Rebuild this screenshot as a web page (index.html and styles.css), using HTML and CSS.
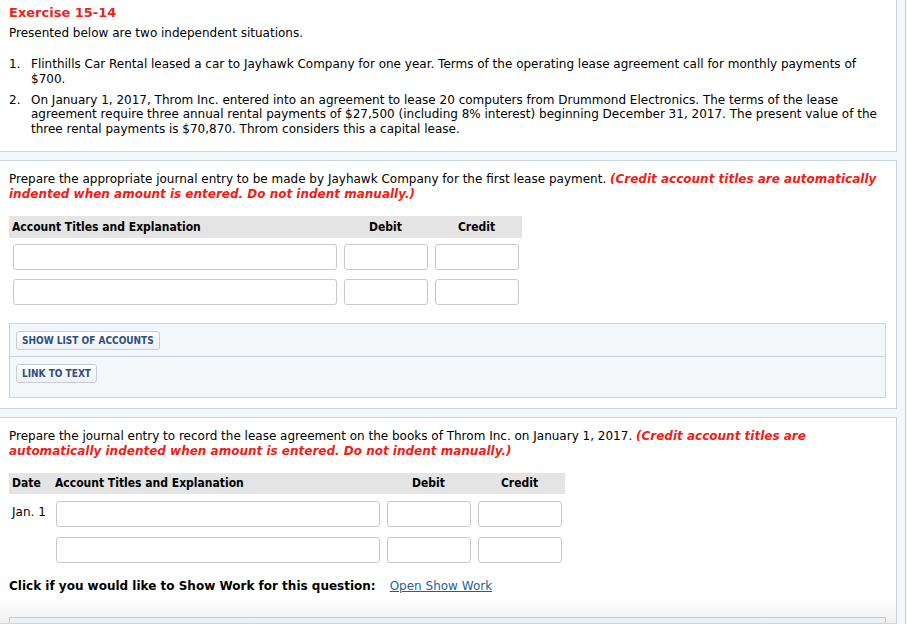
FILE: index.html
```html
<!DOCTYPE html>
<html>
<head>
<meta charset="utf-8">
<link rel="stylesheet" href="styles.css">
</head>
<body>
<div class="page">
  <section class="box intro">
    <h1 class="title">Exercise 15-14</h1>
    <p class="lead">Presented below are two independent situations.</p>
    <ol class="items">
      <li><span class="num">1.</span><span class="txt">Flinthills Car Rental leased a car to Jayhawk Company for one year. Terms of the operating lease agreement call for monthly payments of $700.</span></li>
      <li><span class="num">2.</span><span class="txt">On January 1, 2017, Throm Inc. entered into an agreement to lease 20 computers from Drummond Electronics. The terms of the lease agreement require three annual rental payments of $27,500 (including 8% interest) beginning December 31, 2017. The present value of the three rental payments is $70,870. Throm considers this a capital lease.</span></li>
    </ol>
  </section>

  <section class="box part">
    <p class="prompt">Prepare the appropriate journal entry to be made by Jayhawk Company for the first lease payment. <em class="note">(Credit account titles are automatically</em><br><em class="note">indented when amount is entered. Do not indent manually.)</em></p>
    <div class="journal j3">
      <div class="hd">Account Titles and Explanation</div>
      <div class="hd c">Debit</div>
      <div class="hd c">Credit</div>
      <div class="cell"><input class="fld" type="text"></div>
      <div class="cell"><input class="fld" type="text"></div>
      <div class="cell"><input class="fld" type="text"></div>
      <div class="cell"><input class="fld" type="text"></div>
      <div class="cell"><input class="fld" type="text"></div>
      <div class="cell"><input class="fld" type="text"></div>
    </div>
    <div class="tools">
      <div class="tool-row"><button class="btn">SHOW LIST OF ACCOUNTS</button></div>
      <div class="tool-row last"><button class="btn">LINK TO TEXT</button></div>
    </div>
  </section>

  <section class="box part last-part">
    <p class="prompt">Prepare the journal entry to record the lease agreement on the books of Throm Inc. on January 1, 2017. <em class="note">(Credit account titles are</em><br><em class="note">automatically indented when amount is entered. Do not indent manually.)</em></p>
    <div class="journal j4">
      <div class="hd">Date</div>
      <div class="hd">Account Titles and Explanation</div>
      <div class="hd c">Debit</div>
      <div class="hd c">Credit</div>
      <div class="date">Jan. 1</div>
      <div class="cell"><input class="fld" type="text"></div>
      <div class="cell"><input class="fld" type="text"></div>
      <div class="cell"><input class="fld" type="text"></div>
      <div class="date"></div>
      <div class="cell"><input class="fld" type="text"></div>
      <div class="cell"><input class="fld" type="text"></div>
      <div class="cell"><input class="fld" type="text"></div>
    </div>
    <p class="showwork"><b>Click if you would like to Show Work for this question:</b><a class="link" href="#">Open Show Work</a></p>
    <div class="fade"></div>
    <div class="next-panel"></div>
  </section>
</div>
</body>
</html>
```

FILE: styles.css
```css
html, body {
  margin: 0;
  padding: 0;
}
body {
  background: #f4f7fa;
  font-family: "DejaVu Sans", Verdana, sans-serif;
  font-size: 12px;
  color: #000;
  width: 907px;
  height: 624px;
  overflow: hidden;
}
.page {
  width: 906px;
  height: 624px;
  border-right: 1px solid #c9ced6;
  box-sizing: border-box;
  display: flex;
  flex-direction: column;
  gap: 8px;
}
.box {
  width: 897px;
  box-sizing: border-box;
  background: #fff;
  border: 1px solid #cbd5e1;
  border-left: none;
}
.intro {
  border-top: none;
  padding: 5px 9px 7px 9px;
  height: 152px;
}
.title {
  margin: 0;
  font-size: 13px;
  line-height: 16px;
  font-weight: bold;
  color: #e8251c;
}
.lead {
  margin: 4px 0 0;
  line-height: 16px;
}
.items {
  list-style: none;
  margin: 16px 0 0;
  padding: 0;
  display: flex;
  flex-direction: column;
  gap: 6px;
}
.items li {
  display: grid;
  grid-template-columns: 22px 1fr;
  line-height: 14.8px;
}
.part {
  padding: 11px 10px 10px 9px;
}
.prompt {
  margin: 0;
  line-height: 15px;
}
.note {
  color: #f21b16;
  font-weight: bold;
  font-style: italic;
  white-space: nowrap;
}
.journal {
  display: grid;
  margin-top: 14px;
  width: max-content;
  row-gap: 0;
}
.j3 { grid-template-columns: 331px 91px 91px; }
.j4 { grid-template-columns: 43px 331px 91px 91px; margin-top: 14px; }
.hd {
  background: #e4e4e4;
  height: 22px;
  line-height: 22px;
  padding-left: 3px;
  font-family: "DejaVu Sans Condensed", Tahoma, sans-serif;
  font-weight: bold;
  font-size: 12px;
}
.j4 .hd { height: 21px; line-height: 21px; }
.hd.c { text-align: center; padding-left: 0; }
.cell {
  padding: 6px 3px 3px 4px;
}
.j4 .cell { padding-top: 7px; }
.fld {
  display: block;
  box-sizing: border-box;
  width: 100%;
  height: 26px;
  margin: 0;
  border: 1px solid #c9c9c9;
  border-radius: 3px;
  background: #fff;
  font: inherit;
}
.date {
  padding: 11px 0 0 3px;
  line-height: 14px;
}
.tools {
  margin-top: 15px;
  background: #f4f7fa;
  border: 1px solid #cbd5e1;
}
.tool-row {
  height: 33px;
  box-sizing: border-box;
  padding: 7px 6px;
  border-bottom: 1px solid #cbd5e1;
}
.tool-row.last {
  height: 40px;
  border-bottom: none;
}
.btn {
  display: block;
  height: 19px;
  padding: 0 5px;
  border: 1px solid #c5ced8;
  border-radius: 3px;
  background: linear-gradient(#ffffff, #edf1f5);
  color: #2f4f7e;
  font-family: "DejaVu Sans Condensed", Verdana, sans-serif;
  font-size: 10px;
  font-weight: bold;
  line-height: 17px;
}
.last-part {
  flex: 1;
  padding-bottom: 0;
  display: flex;
  flex-direction: column;
  background: linear-gradient(#fff 0, #fff 180px, #f2f2f2 202px);
}
.showwork {
  margin: 13px 0 0;
  line-height: 15px;
}
.link {
  margin-left: 14px;
  color: #1d5f9c;
}
.fade { flex: 1; }
.next-panel {
  height: 5px;
  background: #eef1f4;
  border: 1px solid #c5ccd6;
  border-bottom: none;
}
```
